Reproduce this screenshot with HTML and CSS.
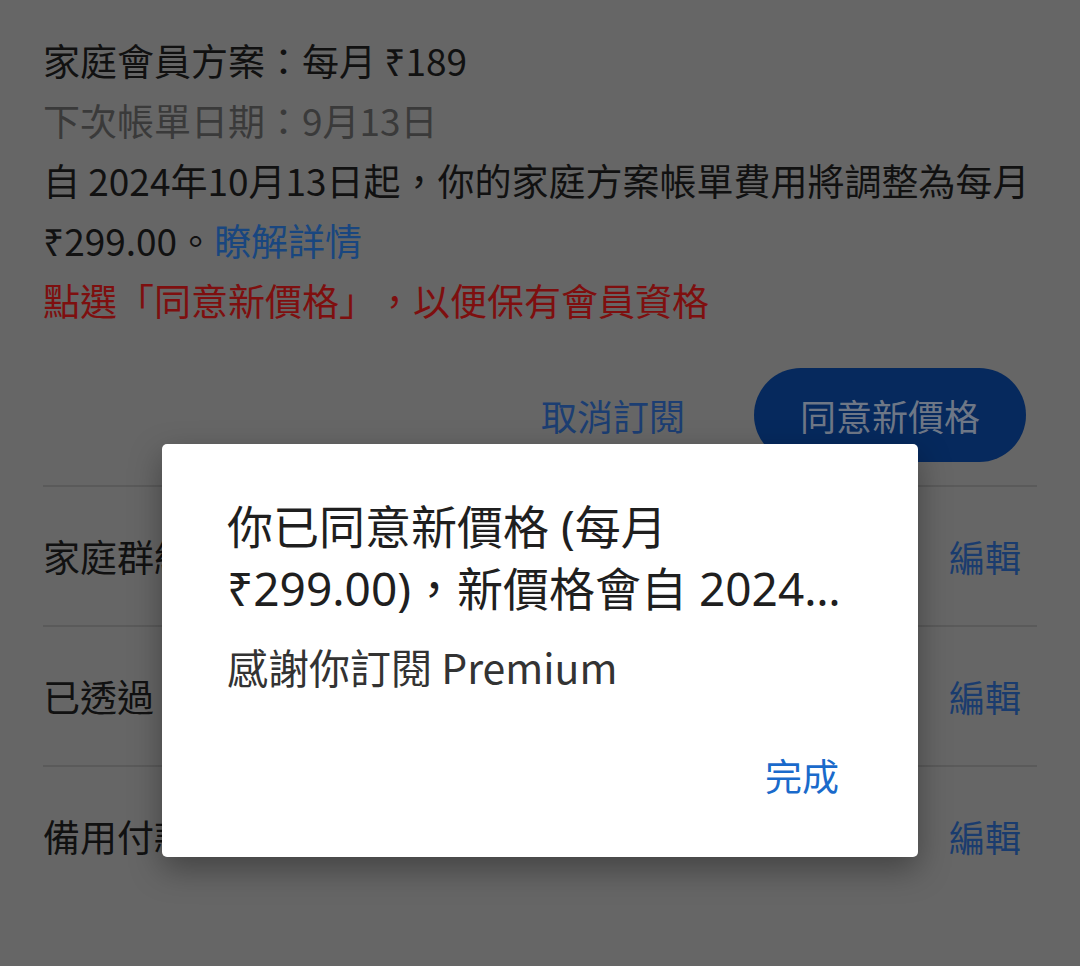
FILE: index.html
```html
<!doctype html>
<html lang="zh-Hant">
  <head>
    <meta charset="UTF-8" />
    <meta name="viewport" content="width=device-width, initial-scale=1.0" />
    <title>會員方案</title>
    <link rel="stylesheet" href="styles.css">
  </head>

  <body>
    <main class="page">
      <section class="plan">
        <p class="plan-title">家庭會員方案：每月 ₹189</p>
        <p class="plan-next">下次帳單日期：9月13日</p>
        <p class="plan-note">
          自 2024年10月13日起，你的家庭方案帳單費用將調整為每月 ₹299.00。<a href="#" class="link">瞭解詳情</a>
        </p>
        <p class="plan-warn">點選「同意新價格」，以便保有會員資格</p>
        <div class="plan-actions">
          <button class="btn-text">取消訂閱</button>
          <button class="btn-pill">同意新價格</button>
        </div>
      </section>

      <ul class="settings">
        <li class="settings-row">
          <span>家庭群組設定</span>
          <a href="#" class="edit">編輯</a>
        </li>
        <li class="settings-row">
          <span>已透過 Google Play 付款</span>
          <a href="#" class="edit">編輯</a>
        </li>
        <li class="settings-row">
          <span>備用付款方式</span>
          <a href="#" class="edit">編輯</a>
        </li>
      </ul>
    </main>

    <!-- dialog shown over the dimmed page -->
    <div class="dialog" role="dialog">
      <h2 class="dialog-title">你已同意新價格 (每月 ₹299.00)，新價格會自 2024年10月13日起生效</h2>
      <p class="dialog-body">感謝你訂閱 Premium</p>
      <div class="dialog-actions">
        <button class="dialog-btn">完成</button>
      </div>
    </div>
  </body>
</html>
```

FILE: styles.css
```css
html,
body {
  margin: 0;
  height: 100%;
}
body {
  background-color: #666666; /* page under the scrim */
  font-family: 'Noto Sans CJK TC', 'Noto Sans', 'DejaVu Sans', sans-serif;
  font-size: 37px;
  line-height: 60px;
  color: #111111;
  text-spacing-trim: space-all; /* keep full-width punctuation */
  overflow: hidden;
}
p {
  margin: 0;
}
button {
  font: inherit;
  border: none;
  background: none;
  padding: 0;
  cursor: pointer;
}
a {
  text-decoration: none;
}

.page {
  padding: 30px 43px 0 43px;
}
.plan-note {
  margin-right: -6px; /* "每月" still fits on the line */
}
.plan-next {
  color: #3a3a3a;
}
.link {
  color: #19467f;
}
.plan-warn {
  color: #7e0f0f;
}
.plan-actions {
  display: flex;
  justify-content: flex-end;
  align-items: center;
  gap: 69px;
  margin-top: 38px;
  margin-right: 11px;
  font-size: 36px;
}
.btn-text {
  color: #1c3e72;
}
.btn-pill {
  height: 94px;
  padding: 0 46px;
  border-radius: 47px;
  background-color: #06295d;
  color: #6e7786;
}

.settings {
  list-style: none;
  margin: 23px 0 0 0;
  padding: 0;
}
.settings-row {
  display: flex;
  justify-content: space-between;
  align-items: center;
  height: 140px;
  border-top: 2px solid #5a5a5a;
  box-sizing: border-box;
  padding-right: 16px;
  white-space: nowrap;
}
.edit {
  color: #1a3c6e;
  font-size: 36px;
}

.dialog {
  position: absolute;
  top: 444px;
  left: 162px;
  width: 756px;
  box-sizing: border-box;
  padding: 51px 65px 54px 65px;
  background-color: #ffffff;
  border-radius: 5px;
  box-shadow: 0 12px 32px rgba(0, 0, 0, 0.35);
}
.dialog-title {
  margin: 0;
  font-family: 'Noto Sans', 'Noto Sans CJK TC', sans-serif;
  font-size: 46px;
  font-weight: 400;
  line-height: 62px;
  color: #1f1f1f;
  display: -webkit-box;
  -webkit-box-orient: vertical;
  -webkit-line-clamp: 2;
  overflow: hidden;
}
.dialog-body {
  margin-top: 19px;
  font-size: 41px;
  line-height: 56px;
  color: #333333;
}
.dialog-actions {
  display: flex;
  justify-content: flex-end;
  margin-top: 53px;
  margin-right: 14px;
}
.dialog-btn {
  font-size: 37px;
  line-height: 56px;
  color: #1a6acb;
}
```
